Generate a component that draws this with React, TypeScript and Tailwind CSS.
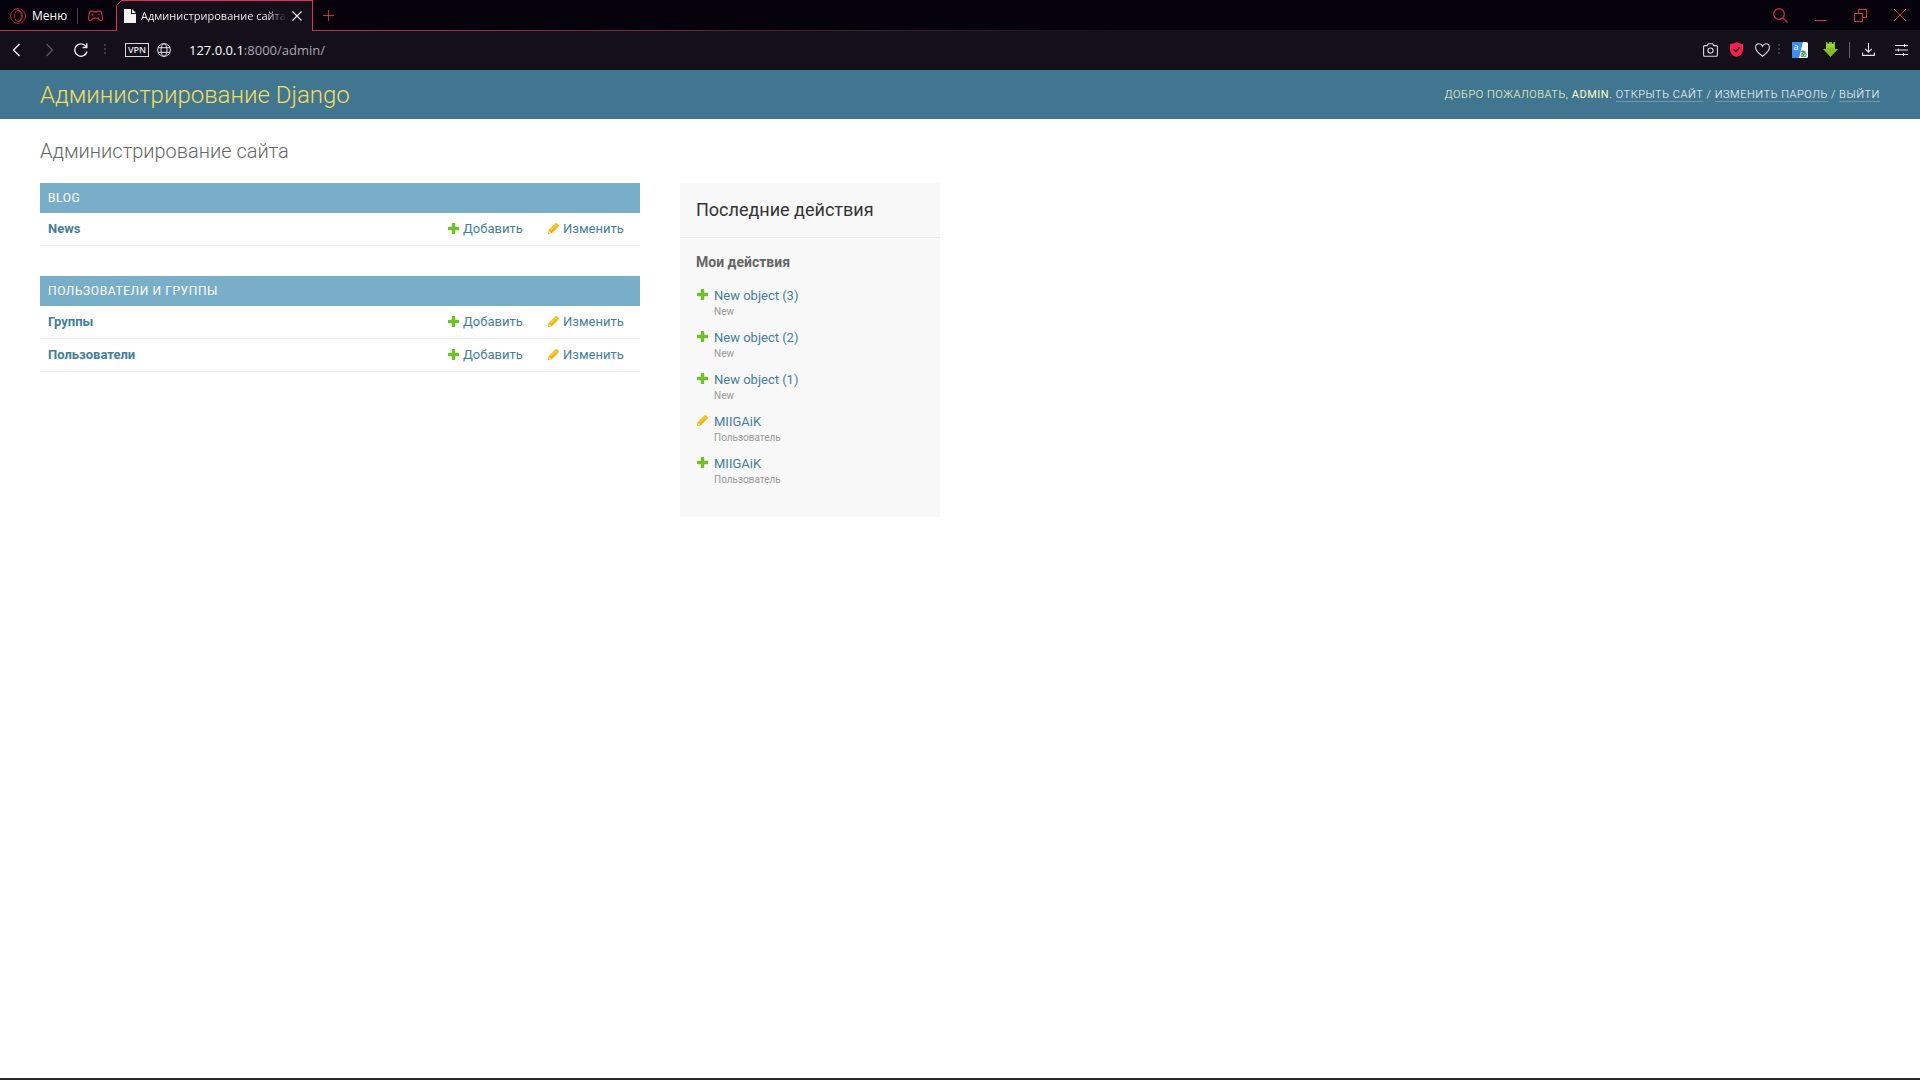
import type { ReactNode } from "react";

type ActionKind = "add" | "change";

const APPS = [
  { name: "Blog", models: ["News"] },
  { name: "Пользователи и группы", models: ["Группы", "Пользователи"] },
];

const RECENT: { kind: ActionKind; title: string; type: string }[] = [
  { kind: "add", title: "New object (3)", type: "New" },
  { kind: "add", title: "New object (2)", type: "New" },
  { kind: "add", title: "New object (1)", type: "New" },
  { kind: "change", title: "MIIGAiK", type: "Пользователь" },
  { kind: "add", title: "MIIGAiK", type: "Пользователь" },
];

function ActionIcon({ kind }: { kind: ActionKind }) {
  if (kind === "add") {
    return (
      <svg width="11" height="11" viewBox="0 0 11 11" className="shrink-0" aria-hidden="true">
        <path
          d="M4.4 0h2.2q.6 0 .6.6v3.2h3.2q.6 0 .6.6v2.2q0 .6-.6.6H7.2v3.2q0 .6-.6.6H4.4q-.6 0-.6-.6V7.2H.6q-.6 0-.6-.6V4.4q0-.6.6-.6h3.2V.6q0-.6.6-.6z"
          fill="#70bf2b"
        />
      </svg>
    );
  }
  return (
    <svg width="11" height="11" viewBox="0 0 11 11" className="shrink-0" aria-hidden="true">
      <path d="M0 11l.6-4L7.4.4Q8.3-.3 9.1.4l1.5 1.5q.7.8 0 1.6l-6.7 6.8z" fill="#efb80b" />
      <path d="M2.6 7l4.2-4.2" stroke="#fbe7a6" strokeWidth="0.9" />
      <path d="M7.3 1.7l2 2" stroke="#fdf3cf" strokeWidth="0.7" />
      <path d="M1.3 8.2l1.5 1.5-1.9.5z" fill="#fff" />
    </svg>
  );
}

function ToolButton({ label, children }: { label: string; children: ReactNode }) {
  return (
    <button type="button" aria-label={label} className="flex shrink-0 items-center justify-center">
      {children}
    </button>
  );
}

function TabStrip() {
  return (
    <div className="flex h-[31px] bg-[#05020b]">
      <div className="flex w-[116px] shrink-0 items-center border-b border-[#c22a4c] pt-0.5 pl-2.5">
        <button type="button" className="flex items-center gap-1.5 text-xs text-white">
          <svg width="16" height="16" viewBox="0 0 16 16" fill="none" stroke="#b5203f" aria-hidden="true">
            <circle cx="8" cy="8" r="7.4" />
            <ellipse cx="8" cy="8" rx="3.4" ry="5.6" />
            <path d="M8 2.4c5.8 0 5.8 11.2 0 11.2" />
          </svg>
          Меню
        </button>
        <span className="ml-2.5 h-4 w-px bg-[#48434e]" />
        <span className="ml-2.5">
          <ToolButton label="GX Corner">
            <svg width="15" height="12" viewBox="0 0 16 12" fill="none" stroke="#d82a4e" strokeWidth="1.2" aria-hidden="true">
              <path d="M3.4.8h1.7l1 .8h3.8l1-.8h1.7q1.4 0 1.9 1.9l.8 4.6q.4 3.6-1.6 3.6-.9 0-1.9-1.3L10.5 8.3h-5L4.2 9.6q-1 1.3-1.9 1.3-2 0-1.6-3.6l.8-4.6Q2 .8 3.4.8z" />
              <path d="M4.9 3.6v2.2M3.8 4.7H6M10 4.7h2.2" />
            </svg>
          </ToolButton>
        </span>
      </div>

      <div className="flex w-[197px] shrink-0">
        <svg width="6" height="31" viewBox="0 0 6 31" aria-hidden="true">
          <path d="M.5 31V5.5L5.5.5H6V31z" fill="#14101a" />
          <path d="M.5 31V5.5L5.5.5H6" fill="none" stroke="#e32d54" />
        </svg>
        <div className="flex min-w-0 flex-1 items-center border-t border-r border-[#e32d54] bg-[#14101a] pr-2.5 pl-0.5">
          <svg width="12" height="14" viewBox="0 0 12 14" className="shrink-0" aria-hidden="true">
            <path d="M0 0h7v5h5v9H0z" fill="#f4f4f4" />
            <path d="M8 0l4 4H8z" fill="#f4f4f4" />
          </svg>
          <span className="ml-[5px] w-[145px] overflow-hidden bg-linear-to-r from-white from-88% to-transparent bg-clip-text text-[11px] leading-4 whitespace-nowrap text-transparent">
            Администрирование сайта
          </span>
          <span className="ml-auto">
            <ToolButton label="Закрыть вкладку">
              <svg width="10" height="10" viewBox="0 0 10 10" stroke="#e8e8e8" strokeWidth="1.2" aria-hidden="true">
                <path d="M.5.5l9 9M9.5.5l-9 9" />
              </svg>
            </ToolButton>
          </span>
        </div>
      </div>

      <div className="flex min-w-0 flex-1 flex-col">
        <div className="flex flex-1 items-center justify-between pr-3.5 pl-2.5">
          <ToolButton label="Новая вкладка">
            <svg width="11" height="11" viewBox="0 0 11 11" stroke="#c9284b" aria-hidden="true">
              <path d="M5.5 0v11M0 5.5h11" />
            </svg>
          </ToolButton>
          <div className="flex items-center gap-[27px]">
            <ToolButton label="Поиск вкладок">
              <svg width="15" height="15" viewBox="0 0 15 15" fill="none" stroke="#d82a4e" strokeWidth="1.2" aria-hidden="true">
                <circle cx="6" cy="6" r="5.3" />
                <path d="M9.8 9.8l4.7 4.7" />
              </svg>
            </ToolButton>
            <ToolButton label="Свернуть">
              <svg width="12" height="12" viewBox="0 0 12 12" stroke="#d82a4e" aria-hidden="true">
                <path d="M0 11.5h12" />
              </svg>
            </ToolButton>
            <ToolButton label="Свернуть в окно">
              <svg width="13" height="13" viewBox="0 0 13 13" fill="none" stroke="#d82a4e" aria-hidden="true">
                <path d="M.5 4.5h8v8h-8zM4.5 4.5v-4h8v8h-4" />
              </svg>
            </ToolButton>
            <ToolButton label="Закрыть">
              <svg width="12" height="12" viewBox="0 0 12 12" stroke="#d82a4e" aria-hidden="true">
                <path d="M0 0l12 12M12 0L0 12" />
              </svg>
            </ToolButton>
          </div>
        </div>
        {/* accent line that dies out toward the window buttons */}
        <div className="h-px bg-linear-to-r from-[#c22a4c] to-[#14101a] to-50%" />
      </div>
    </div>
  );
}

function Dots() {
  return (
    <svg width="2" height="11" viewBox="0 0 2 11" fill="#3f3a46" aria-hidden="true">
      <path d="M0 0h2v2H0zM0 4h2v2H0zM0 8h2v2H0z" />
    </svg>
  );
}

function AddressBar() {
  return (
    <div className="flex h-[39px] items-center justify-between bg-[#14101a] px-3 pb-0.5">
      <div className="flex flex-1 items-center">
        <ToolButton label="Назад">
          <svg width="9" height="14" viewBox="0 0 9 14" fill="none" stroke="#f0f0f0" strokeWidth="1.4" aria-hidden="true">
            <path d="M7.5 1l-6 6 6 6" />
          </svg>
        </ToolButton>
        <span className="ml-6">
          <ToolButton label="Вперёд">
            <svg width="9" height="14" viewBox="0 0 9 14" fill="none" stroke="#5a5661" strokeWidth="1.4" aria-hidden="true">
              <path d="M1.5 1l6 6-6 6" />
            </svg>
          </ToolButton>
        </span>
        <span className="ml-5">
          <ToolButton label="Обновить">
            <svg width="14" height="14" viewBox="0 0 14 14" fill="none" stroke="#e8e8e8" strokeWidth="1.4" aria-hidden="true">
              <path d="M12.2 3.7A6.2 6.2 0 1 0 13 8.5M12.8.3v4.2H8.6" />
            </svg>
          </ToolButton>
        </span>
        <span className="ml-4">
          <Dots />
        </span>
        <button
          type="button"
          className="ml-[19px] flex h-3.5 w-6 items-center justify-center border border-[#d8d8da] text-[9px] leading-none font-semibold text-[#e4e4e6]"
        >
          VPN
        </button>
        <span className="ml-2">
          <ToolButton label="Сведения о сайте">
            <svg width="14" height="14" viewBox="0 0 14 14" fill="none" stroke="#e0e0e2" aria-hidden="true">
              <circle cx="7" cy="7" r="6.4" />
              <ellipse cx="7" cy="7" rx="3" ry="6.4" />
              <path d="M1.2 4.7h11.6M1.2 9.3h11.6" />
            </svg>
          </ToolButton>
        </span>
        <a href="#" className="ml-[18px] text-[13px] leading-5 text-[#a9a7ad]">
          <span className="text-white">127.0.0.1</span>:8000/admin/
        </a>
      </div>

      <div className="flex items-center">
        <ToolButton label="Снимок экрана">
          <svg width="15" height="14" viewBox="0 0 15 14" fill="none" stroke="#d9d8db" strokeWidth="1.1" aria-hidden="true">
            <path d="M1.6 2.6h2.6L5.4.7h4.2l1.2 1.9h2.6q1 0 1 1v8.6q0 1-1 1H1.6q-1 0-1-1V3.6q0-1 1-1z" />
            <circle cx="7.5" cy="7.6" r="2.6" />
          </svg>
        </ToolButton>
        <span className="ml-3">
          <ToolButton label="Блокировка рекламы">
            <svg width="13" height="15" viewBox="0 0 13 15" aria-hidden="true">
              <path d="M6.5 0q3 1.9 6.5 2v5.5q0 5.2-6.5 7.500Q0 12.700 0 7.500V2q3.500-.1 6.500-2z" fill="#f91e4e" />
              <path d="M3.5 7.2l2.2 2.3 3.9-4.1" fill="none" stroke="#14101a" strokeWidth="1.5" />
            </svg>
          </ToolButton>
        </span>
        <span className="ml-3">
          <ToolButton label="Добавить в закладки">
            <svg width="15" height="14" viewBox="0 0 15 14" fill="none" stroke="#d9d8db" strokeWidth="1.1" aria-hidden="true">
              <path d="M7.5 13.2Q.6 8 .6 4.4.6.7 4 .7q2.500 0 3.500 2.500Q8.500.7 11 .7q3.400 0 3.400 3.700 0 3.600-6.900 8.800z" />
            </svg>
          </ToolButton>
        </span>
        <span className="ml-2">
          <Dots />
        </span>
        <span className="ml-3">
          <ToolButton label="Переводчик">
            <svg width="16" height="16" viewBox="0 0 16 16" className="overflow-visible" aria-hidden="true">
              <rect width="16" height="16" rx="1.5" fill="#fff" />
              <path d="M1.5 0H11L7 16H1.5Q0 16 0 14.5v-13Q0 0 1.5 0z" fill="#3b8df5" />
              <text x="1.5" y="8" fontSize="9" fill="#fff">
                a
              </text>
              <text x="8" y="14" fontSize="7" fontWeight="700" fill="#2f8f46">
                あ
              </text>
            </svg>
          </ToolButton>
        </span>
        <span className="ml-[15px]">
          <ToolButton label="Загрузка файлов">
            <svg width="15" height="15" viewBox="0 0 15 15" aria-hidden="true">
              <path d="M3 0h1.5v1.5H6V0h3v1.5h1.5V0H12v7h3l-7.5 8L0 7h3z" fill="#86bd23" />
              <path d="M3.5 2h8v3.5h-8z" fill="#9fd433" />
            </svg>
          </ToolButton>
        </span>
        <span className="ml-[11px] h-4 w-px bg-[#65616a]" />
        <span className="ml-3">
          <ToolButton label="Загрузки">
            <svg width="13" height="13" viewBox="0 0 13 13" fill="none" stroke="#e4e4e6" strokeWidth="1.1" aria-hidden="true">
              <path d="M6.5 0v9M3.2 5.9l3.3 3.3 3.3-3.3M.6 9.5v2.9h11.8V9.5" />
            </svg>
          </ToolButton>
        </span>
        <span className="ml-5">
          <ToolButton label="Простая настройка">
            <svg width="13" height="12" viewBox="0 0 13 12" fill="none" stroke="#e4e4e6" aria-hidden="true">
              <path d="M0 1.5h13M0 6h13M0 10.5h13M9.5 0v3M3.5 4.5v3M8.5 9v3" />
            </svg>
          </ToolButton>
        </span>
      </div>
    </div>
  );
}

function HeaderLink({ children }: { children: ReactNode }) {
  return (
    <a href="#" className="border-b border-white/25 text-white">
      {children}
    </a>
  );
}

function AppModule({ name, models }: { name: string; models: string[] }) {
  return (
    <table className="mb-[30px] w-full table-fixed border-collapse text-[13px] leading-4">
      <caption className="bg-[#79aec8] p-2 text-left text-xs leading-[14px] tracking-wider text-white uppercase">
        <a href="#">{name}</a>
      </caption>
      <tbody>
        {models.map((model) => (
          <tr key={model} className="border-b border-[#eeeeee] text-[#447e9b]">
            <th scope="row" className="p-2 text-left font-bold">
              <a href="#">{model}</a>
            </th>
            <td className="w-[100px] p-2">
              <a href="#" className="flex gap-1">
                <span className="pt-0.5">
                  <ActionIcon kind="add" />
                </span>
                Добавить
              </a>
            </td>
            <td className="w-[100px] p-2">
              <a href="#" className="flex gap-1">
                <span className="pt-0.5">
                  <ActionIcon kind="change" />
                </span>
                Изменить
              </a>
            </td>
          </tr>
        ))}
      </tbody>
    </table>
  );
}

function RecentActions() {
  return (
    <aside className="w-[260px] shrink-0 self-start bg-[#f8f8f8] pb-[25px]">
      <h2 className="border-b border-[#eaeaea] p-4 text-lg leading-[22px] text-[#333333]">
        Последние действия
      </h2>
      <h3 className="px-4 pt-4 pb-3 text-sm leading-4 font-bold text-[#666666]">Мои действия</h3>
      <ul className="pr-4 pl-[17px]">
        {RECENT.map((entry, i) => (
          <li key={i} className="flex gap-1.5 pt-1 pb-1.5">
            <span className="pt-[3px]">
              <ActionIcon kind={entry.kind} />
            </span>
            <div>
              <a href="#" className="block text-[13px] leading-5 text-[#447e9b]">
                {entry.title}
              </a>
              <span className="block text-[10px] leading-3 text-[#999999]">{entry.type}</span>
            </div>
          </li>
        ))}
      </ul>
    </aside>
  );
}

export default function App() {
  return (
    <div className="flex min-h-screen flex-col border-b-2 border-[#2b292d] bg-white font-['Roboto',sans-serif]">
      <div className="font-['Open_Sans','Noto_Sans_CJK_JP',sans-serif]">
        <TabStrip />
        <AddressBar />
      </div>

      <header className="flex items-center justify-between bg-[#417690] px-10 py-2.5 text-[#ffffcc]">
        <h1 className="pt-px text-2xl leading-7 font-light text-[#f5dd5d]">
          <a href="#">Администрирование Django</a>
        </h1>
        <div className="text-[11px] leading-[14px] font-light tracking-wider uppercase">
          Добро пожаловать, <strong>admin</strong>. <HeaderLink>Открыть сайт</HeaderLink> /{" "}
          <HeaderLink>Изменить пароль</HeaderLink> / <HeaderLink>Выйти</HeaderLink>
        </div>
      </header>

      <main className="px-10 pt-5">
        <h2 className="mb-5 text-xl leading-6 font-light text-[#666666]">Администрирование сайта</h2>
        <div className="flex gap-10">
          <div className="w-[600px] shrink-0">
            {APPS.map((app) => (
              <AppModule key={app.name} name={app.name} models={app.models} />
            ))}
          </div>
          <RecentActions />
        </div>
      </main>
    </div>
  );
}
